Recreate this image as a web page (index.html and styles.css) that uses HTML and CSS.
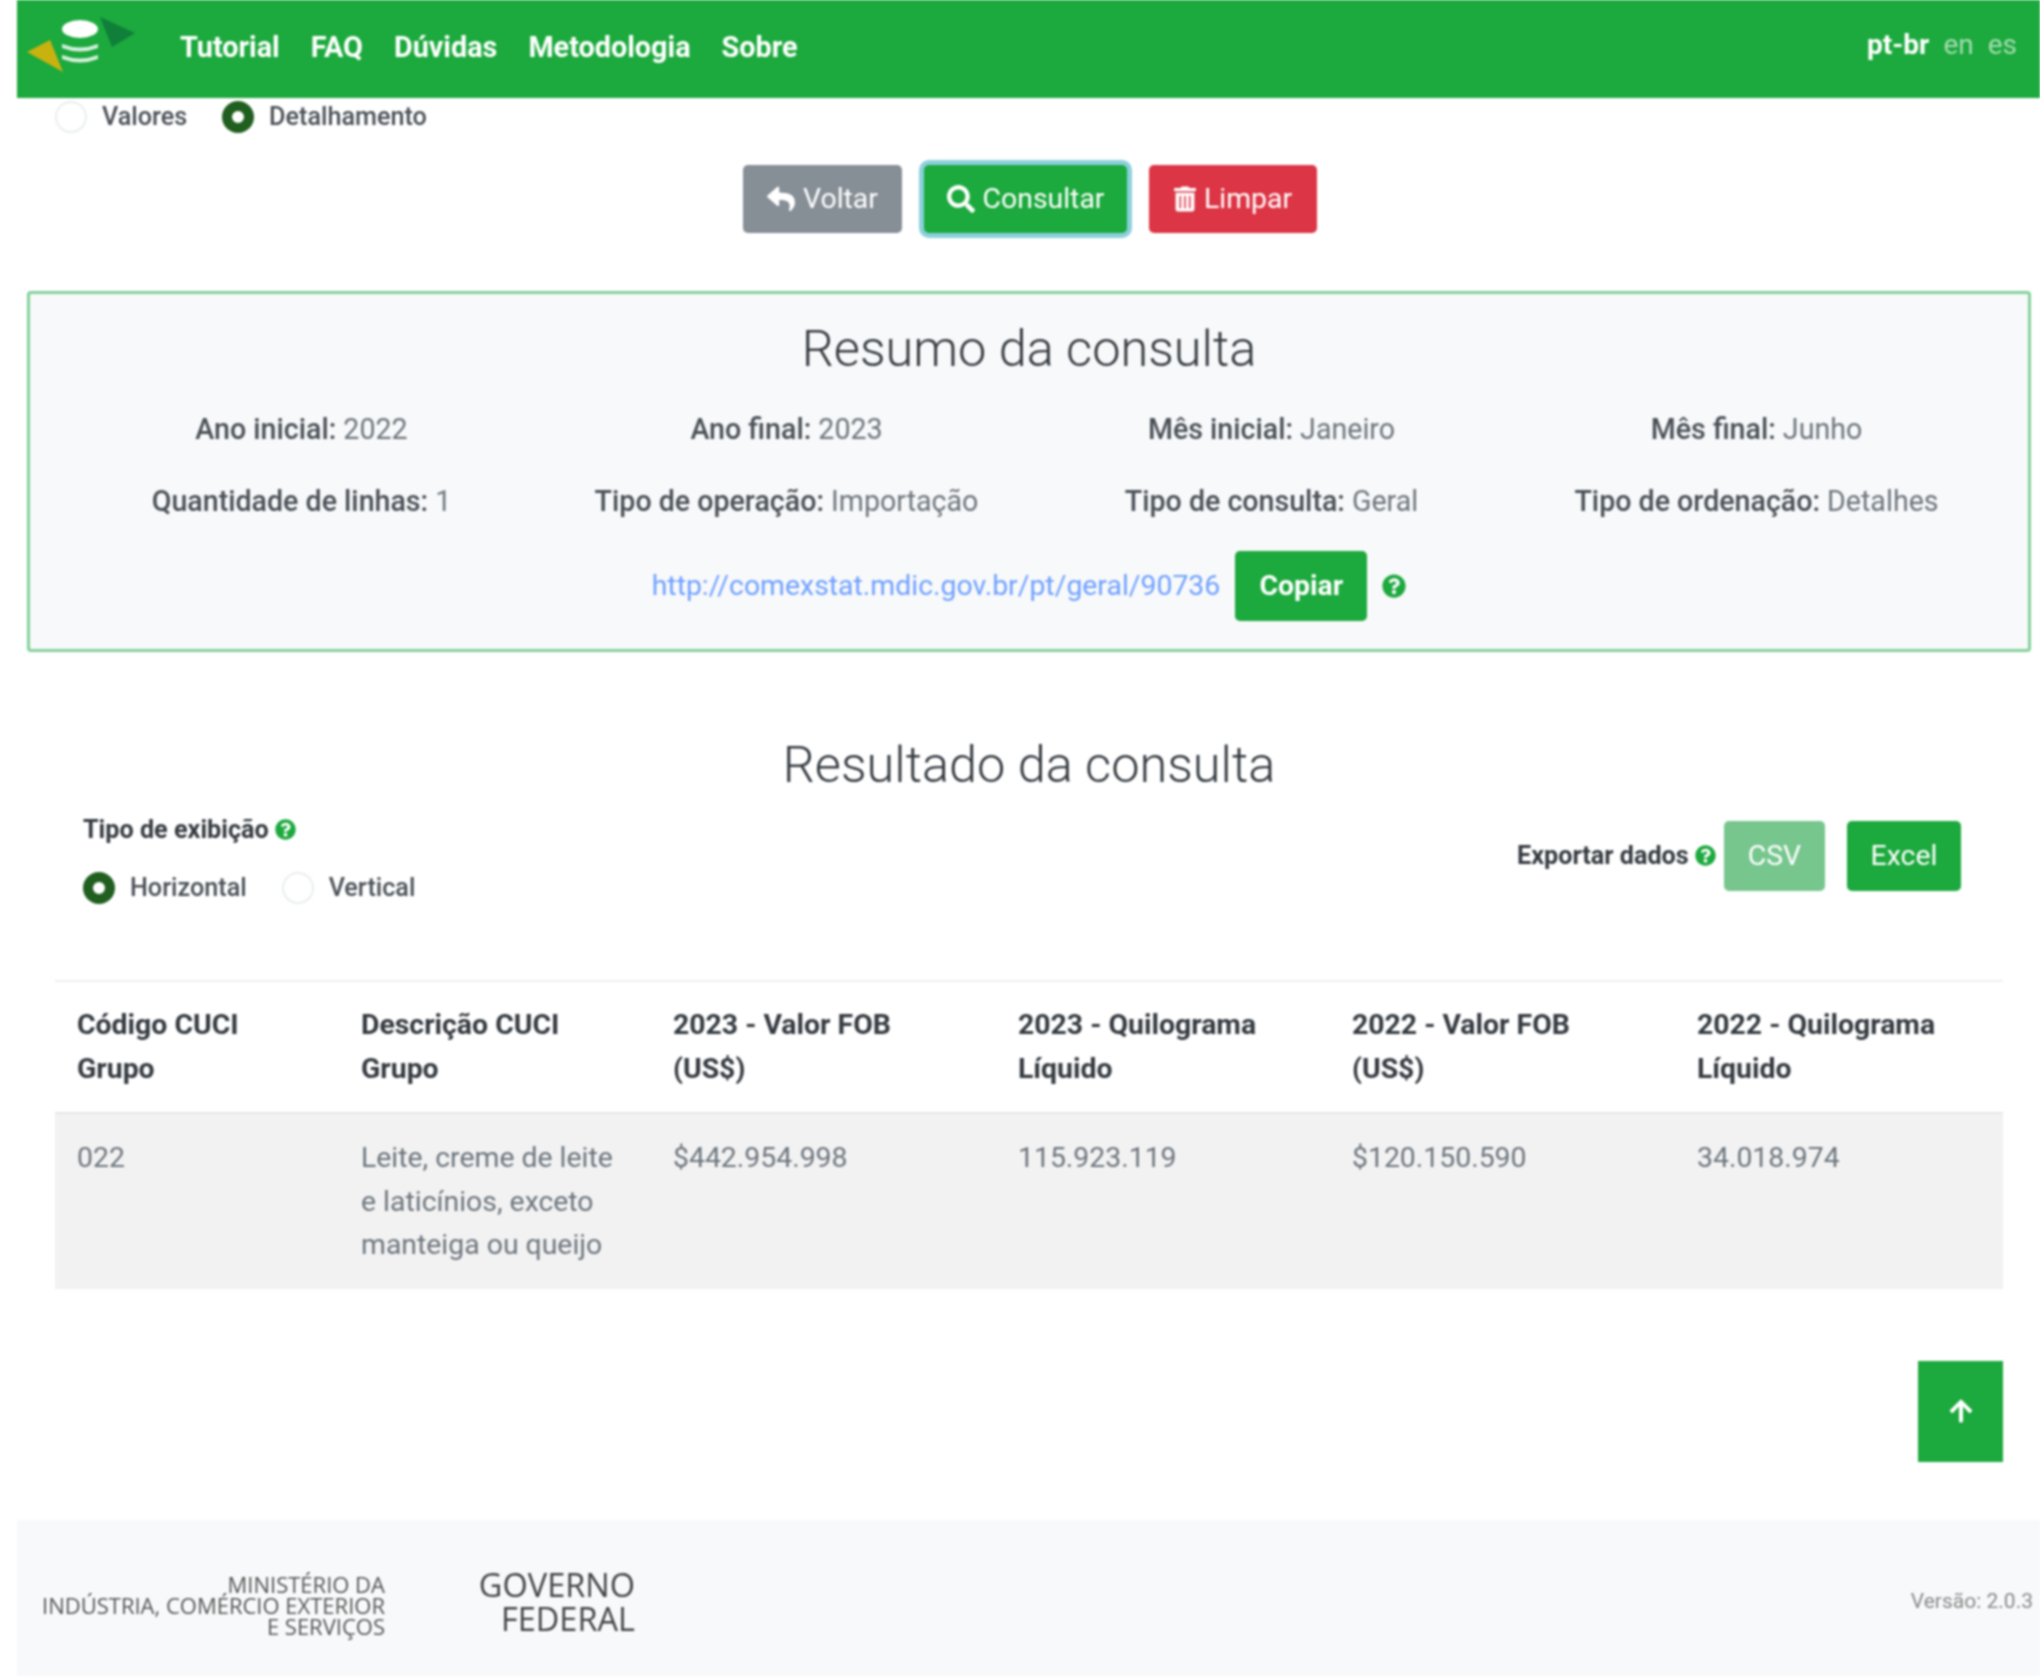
FILE: index.html
```html
<!DOCTYPE html>
<html lang="pt-br">
<head>
  <meta charset="UTF-8" />
  <meta name="viewport" content="width=device-width, initial-scale=1.0"/>
  <title>Comex Stat</title>
  <link rel="stylesheet" href="styles.css">
</head>
<body>
  <nav class="navbar">
    <svg class="logo" viewBox="0 0 108 55" aria-hidden="true">
      <polygon points="0,35 23,23 36,55" fill="#c9b210"/>
      <polygon points="73,0 108,16 85,30" fill="#0f7f3a"/>
      <ellipse cx="53" cy="12" rx="18" ry="9" fill="#fff"/>
      <path d="M35 27 q18 7 36 0 v4 q-18 7 -36 0z" fill="#d7f0de"/>
      <path d="M35 38 q18 7 36 0 v4 q-18 7 -36 0z" fill="#d7f0de"/>
    </svg>
    <ul class="nav-links">
      <li>Tutorial</li>
      <li>FAQ</li>
      <li>Dúvidas</li>
      <li>Metodologia</li>
      <li>Sobre</li>
    </ul>
    <div class="langs">
      <span class="lang-active">pt-br</span>
      <span>en</span>
      <span>es</span>
    </div>
  </nav>

  <div class="radios top-radios">
    <label class="radio"><span class="dot"></span>Valores</label>
    <label class="radio"><span class="dot checked"></span>Detalhamento</label>
  </div>

  <div class="actions">
    <button class="btn btn-gray">
      <svg class="icon" viewBox="0 0 512 512"><path d="M8.309 189.836L184.313 37.851C199.719 24.546 224 35.347 224 56.015v80.053c160.629 1.839 288 34.032 288 186.258 0 61.441-39.581 122.309-83.333 154.132-13.653 9.931-33.111-2.533-28.077-18.631 45.344-145.012-21.507-183.51-176.59-185.742V360c0 20.7-24.3 31.453-39.687 18.164l-176.004-152c-11.071-9.562-11.086-26.753 0-36.328z"/></svg>
      Voltar
    </button>
    <button class="btn btn-green btn-focus">
      <svg class="icon" viewBox="0 0 512 512"><path d="M505 442.7L405.3 343c-4.5-4.5-10.6-7-17-7H372c27.6-35.3 44-79.7 44-128C416 93.1 322.9 0 208 0S0 93.1 0 208s93.1 208 208 208c48.3 0 92.7-16.4 128-44v16.3c0 6.4 2.5 12.5 7 17l99.7 99.7c9.4 9.4 24.6 9.4 33.9 0l28.3-28.3c9.4-9.4 9.4-24.6.1-34zM208 336c-70.7 0-128-57.2-128-128 0-70.7 57.2-128 128-128 70.7 0 128 57.2 128 128 0 70.7-57.2 128-128 128z"/></svg>
      Consultar
    </button>
    <button class="btn btn-red">
      <svg class="icon icon-trash" viewBox="0 0 448 512"><path d="M32 464a48 48 0 0 0 48 48h288a48 48 0 0 0 48-48V128H32zm272-256a16 16 0 0 1 32 0v224a16 16 0 0 1-32 0zm-96 0a16 16 0 0 1 32 0v224a16 16 0 0 1-32 0zm-96 0a16 16 0 0 1 32 0v224a16 16 0 0 1-32 0zM432 32H312l-9.4-18.7A24 24 0 0 0 281.1 0H166.8a23.72 23.72 0 0 0-21.4 13.3L136 32H16A16 16 0 0 0 0 48v32a16 16 0 0 0 16 16h416a16 16 0 0 0 16-16V48a16 16 0 0 0-16-16z"/></svg>
      Limpar
    </button>
  </div>

  <section class="summary">
    <h2>Resumo da consulta</h2>
    <div class="summary-grid">
      <div><b>Ano inicial:</b> 2022</div>
      <div><b>Ano final:</b> 2023</div>
      <div><b>Mês inicial:</b> Janeiro</div>
      <div><b>Mês final:</b> Junho</div>
      <div><b>Quantidade de linhas:</b> 1</div>
      <div><b>Tipo de operação:</b> Importação</div>
      <div><b>Tipo de consulta:</b> Geral</div>
      <div><b>Tipo de ordenação:</b> Detalhes</div>
    </div>
    <div class="share">
      <a href="#">http://comexstat.mdic.gov.br/pt/geral/90736</a>
      <button class="btn btn-green btn-copy">Copiar</button>
      <svg class="help help-big" viewBox="0 0 512 512"><path d="M504 256c0 136.997-111.043 248-248 248S8 392.997 8 256C8 119.083 119.043 8 256 8s248 111.083 248 248zM262.655 90c-54.497 0-89.255 22.957-116.549 63.758-3.536 5.286-2.353 12.415 2.715 16.258l34.699 26.31c5.205 3.947 12.621 3.008 16.665-2.122 17.864-22.658 30.113-35.797 57.303-35.797 20.429 0 45.698 13.148 45.698 32.958 0 14.976-12.363 22.667-32.534 33.976C247.128 238.528 216 254.941 216 296v4c0 6.627 5.373 12 12 12h56c6.627 0 12-5.373 12-12v-1.333c0-28.462 83.186-29.647 83.186-106.667 0-58.002-60.165-102-116.531-102zM256 338c-25.365 0-46 20.635-46 46 0 25.364 20.635 46 46 46s46-20.636 46-46c0-25.365-20.635-46-46-46z"/></svg>
    </div>
  </section>

  <section class="result">
    <h2>Resultado da consulta</h2>
    <div class="result-tools">
      <div class="display-type">
        <div class="tool-label">Tipo de exibição
          <svg class="help" viewBox="0 0 512 512"><path d="M504 256c0 136.997-111.043 248-248 248S8 392.997 8 256C8 119.083 119.043 8 256 8s248 111.083 248 248zM262.655 90c-54.497 0-89.255 22.957-116.549 63.758-3.536 5.286-2.353 12.415 2.715 16.258l34.699 26.31c5.205 3.947 12.621 3.008 16.665-2.122 17.864-22.658 30.113-35.797 57.303-35.797 20.429 0 45.698 13.148 45.698 32.958 0 14.976-12.363 22.667-32.534 33.976C247.128 238.528 216 254.941 216 296v4c0 6.627 5.373 12 12 12h56c6.627 0 12-5.373 12-12v-1.333c0-28.462 83.186-29.647 83.186-106.667 0-58.002-60.165-102-116.531-102zM256 338c-25.365 0-46 20.635-46 46 0 25.364 20.635 46 46 46s46-20.636 46-46c0-25.365-20.635-46-46-46z"/></svg>
        </div>
        <div class="radios">
          <label class="radio"><span class="dot checked"></span>Horizontal</label>
          <label class="radio"><span class="dot"></span>Vertical</label>
        </div>
      </div>
      <div class="export">
        <span class="tool-label">Exportar dados
          <svg class="help" viewBox="0 0 512 512"><path d="M504 256c0 136.997-111.043 248-248 248S8 392.997 8 256C8 119.083 119.043 8 256 8s248 111.083 248 248zM262.655 90c-54.497 0-89.255 22.957-116.549 63.758-3.536 5.286-2.353 12.415 2.715 16.258l34.699 26.31c5.205 3.947 12.621 3.008 16.665-2.122 17.864-22.658 30.113-35.797 57.303-35.797 20.429 0 45.698 13.148 45.698 32.958 0 14.976-12.363 22.667-32.534 33.976C247.128 238.528 216 254.941 216 296v4c0 6.627 5.373 12 12 12h56c6.627 0 12-5.373 12-12v-1.333c0-28.462 83.186-29.647 83.186-106.667 0-58.002-60.165-102-116.531-102zM256 338c-25.365 0-46 20.635-46 46 0 25.364 20.635 46 46 46s46-20.636 46-46c0-25.365-20.635-46-46-46z"/></svg>
        </span>
        <button class="btn btn-green btn-csv">CSV</button>
        <button class="btn btn-green btn-excel">Excel</button>
      </div>
    </div>

    <table class="result-table">
      <colgroup>
        <col class="col-a"><col class="col-b"><col class="col-c"><col class="col-d"><col class="col-e"><col class="col-f">
      </colgroup>
      <thead>
        <tr>
          <th>Código CUCI Grupo</th>
          <th>Descrição CUCI Grupo</th>
          <th>2023 - Valor FOB (US$)</th>
          <th>2023 - Quilograma Líquido</th>
          <th>2022 - Valor FOB (US$)</th>
          <th>2022 - Quilograma Líquido</th>
        </tr>
      </thead>
      <tbody>
        <tr>
          <td>022</td>
          <td>Leite, creme de leite e laticínios, exceto manteiga ou queijo</td>
          <td>$442.954.998</td>
          <td>115.923.119</td>
          <td>$120.150.590</td>
          <td>34.018.974</td>
        </tr>
      </tbody>
    </table>

    <div class="to-top">
      <a class="up-btn" href="#">
        <svg class="up-icon" viewBox="0 0 448 512"><path d="M34.9 289.5l-22.2-22.2c-9.4-9.4-9.4-24.6 0-33.9L207 39c9.4-9.4 24.6-9.4 33.9 0l194.3 194.3c9.4 9.4 9.4 24.6 0 33.9L413 289.4c-9.5 9.5-25 9.3-34.3-.4L264 168.6V456c0 13.3-10.7 24-24 24h-32c-13.3 0-24-10.7-24-24V168.6L69.2 289.1c-9.3 9.8-24.8 10-34.3.4z"/></svg>
      </a>
    </div>
  </section>

  <footer class="footer">
    <div class="ministry">MINISTÉRIO DA<br>INDÚSTRIA, COMÉRCIO EXTERIOR<br>E SERVIÇOS</div>
    <div class="gov">GOVERNO<br>FEDERAL</div>
    <div class="version">Versão: 2.0.3</div>
  </footer>
</body>
</html>
```

FILE: styles.css
```css
:root {
  --green: #1ca93d;
  --text: #6c757d;
  --dark: #343a40;
}

* {
  box-sizing: border-box;
}

body {
  margin: 0;
  font-family: Roboto, "Liberation Sans", sans-serif;
  font-size: 28.4px;
  line-height: 1.5;
  color: var(--text);
  background: #fff;
  filter: blur(1.2px);
}

/* navbar */
.navbar {
  display: flex;
  align-items: center;
  height: 98px;
  margin-left: 17px;
  padding: 0 23px 0 10px;
  background: var(--green);
  color: #fff;
}

.logo {
  width: 108px;
  height: 55px;
  margin: -9px 45px 0 0;
}

.nav-links {
  display: flex;
  gap: 31px;
  margin: -2px 0 0;
  padding: 0;
  list-style: none;
  font-size: 28.8px;
  font-weight: 700;
}

.langs {
  display: flex;
  gap: 14px;
  margin-left: auto;
  margin-top: -8px;
  font-size: 28px;
  color: rgba(255, 255, 255, 0.6);
}

.lang-active {
  font-weight: 700;
  color: #fff;
}

/* radios */
.radios {
  display: flex;
  gap: 35px;
}

.top-radios {
  height: 38px;
  padding-left: 55px;
  align-items: center;
}

.radio {
  display: flex;
  align-items: center;
  gap: 15px;
  font-size: 25.2px;
  font-weight: 500;
  color: #495057;
}

.dot {
  width: 32px;
  height: 32px;
  border: 2px solid #e9ecef;
  border-radius: 50%;
  background: #fff;
}

.dot.checked {
  border: 10px solid #205f1f;
}

/* buttons */
.actions {
  display: flex;
  justify-content: center;
  gap: 22px;
  margin-top: 29px;
  padding-left: 20px;
}

.btn {
  display: inline-flex;
  align-items: center;
  justify-content: center;
  gap: 8px;
  height: 68px;
  padding: 0 20px;
  border: none;
  border-radius: 5px;
  font: inherit;
  color: #fff;
}

.btn-gray {
  width: 159px;
  background: #868e96;
}

.btn-green {
  background: var(--green);
}

.btn-focus {
  width: 203px;
  box-shadow: 0 0 0 5px rgba(23, 162, 184, 0.5);
}

.btn-red {
  width: 168px;
  background: #dc3545;
}

.icon {
  width: 28px;
  height: 28px;
  fill: currentColor;
}

.icon-trash {
  width: 22px;
}

/* resumo */
.summary {
  margin: 58px 9px 0 27px;
  height: 361px;
  padding-top: 25px;
  border: 3px solid #84d19a;
  border-radius: 4px;
  background: #f8f9fa;
  text-align: center;
}

h2 {
  margin: 0;
  font-size: 50.5px;
  font-weight: 300;
  line-height: 60px;
  color: #343a40;
  text-align: center;
}

.summary-grid {
  display: grid;
  grid-template-columns: repeat(4, 485px);
  grid-auto-rows: 72px;
  align-items: center;
  justify-content: center;
  margin-top: 14px;
  font-size: 28.6px;
}

.summary-grid b {
  font-weight: 500;
  color: #495057;
}

.share {
  display: flex;
  align-items: center;
  justify-content: center;
  gap: 15px;
  margin-top: 14px;
}

.share a {
  color: #6ea0ff;
  text-decoration: none;
}

.btn-copy {
  width: 132px;
  height: 70px;
  font-weight: 700;
}

.help {
  width: 21px;
  height: 21px;
  vertical-align: -2px;
  fill: var(--green);
}

.help-big {
  width: 24px;
  height: 24px;
}

/* resultado */
.result {
  margin: 83px 37px 0 55px;
}

.result-tools {
  display: flex;
  justify-content: space-between;
  align-items: center;
  height: 110px;
  margin-top: 9px;
  padding: 0 42px 0 28px;
}

.tool-label {
  font-size: 25.2px;
  font-weight: 700;
  color: var(--dark);
}

.display-type .radios {
  margin-top: 20px;
}

.export {
  display: flex;
  align-items: center;
  gap: 8px;
  margin-bottom: 6px;
}

.btn-csv {
  width: 101px;
  height: 70px;
  background: #76c68d;
}

.btn-excel {
  width: 114px;
  height: 70px;
  margin-left: 14px;
}

.result-table {
  width: 100%;
  margin-top: 66px;
  border-collapse: collapse;
  table-layout: fixed;
}

.col-a { width: 284px; }
.col-b { width: 312px; }
.col-c { width: 345px; }
.col-d { width: 334px; }
.col-e { width: 345px; }
.col-f { width: 328px; }

.result-table th,
.result-table td {
  padding: 21px 22px;
  text-align: left;
  vertical-align: top;
  line-height: 43.5px;
}

.result-table th {
  padding-right: 44px;
  padding-bottom: 22px;
  border-top: 2px solid #eef0f2;
  border-bottom: 2px solid #e4e6e8;
  font-weight: 700;
  color: var(--dark);
}

.result-table td {
  padding-top: 22px;
  padding-bottom: 22px;
  background: #f2f2f2;
}

.to-top {
  display: flex;
  justify-content: flex-end;
  margin-top: 72px;
}

.up-btn {
  display: flex;
  align-items: center;
  justify-content: center;
  width: 85px;
  height: 101px;
  background: var(--green);
}

.up-icon {
  width: 24px;
  height: 26px;
  fill: #fff;
}

/* footer */
.footer {
  display: flex;
  align-items: center;
  height: 156px;
  margin: 58px 0 0 17px;
  padding: 8px 7px 0 0;
  background: #f8f9fa;
  font-family: "Open Sans", sans-serif;
  color: #555;
}

.ministry {
  width: 368px;
  margin-top: 8px;
  font-size: 22px;
  line-height: 21px;
  text-align: right;
}

.gov {
  width: 250px;
  font-size: 32.5px;
  line-height: 34px;
  text-align: right;
  color: #444;
}

.version {
  margin-left: auto;
  font-family: Roboto, sans-serif;
  font-size: 21px;
  color: #888;
}
```
